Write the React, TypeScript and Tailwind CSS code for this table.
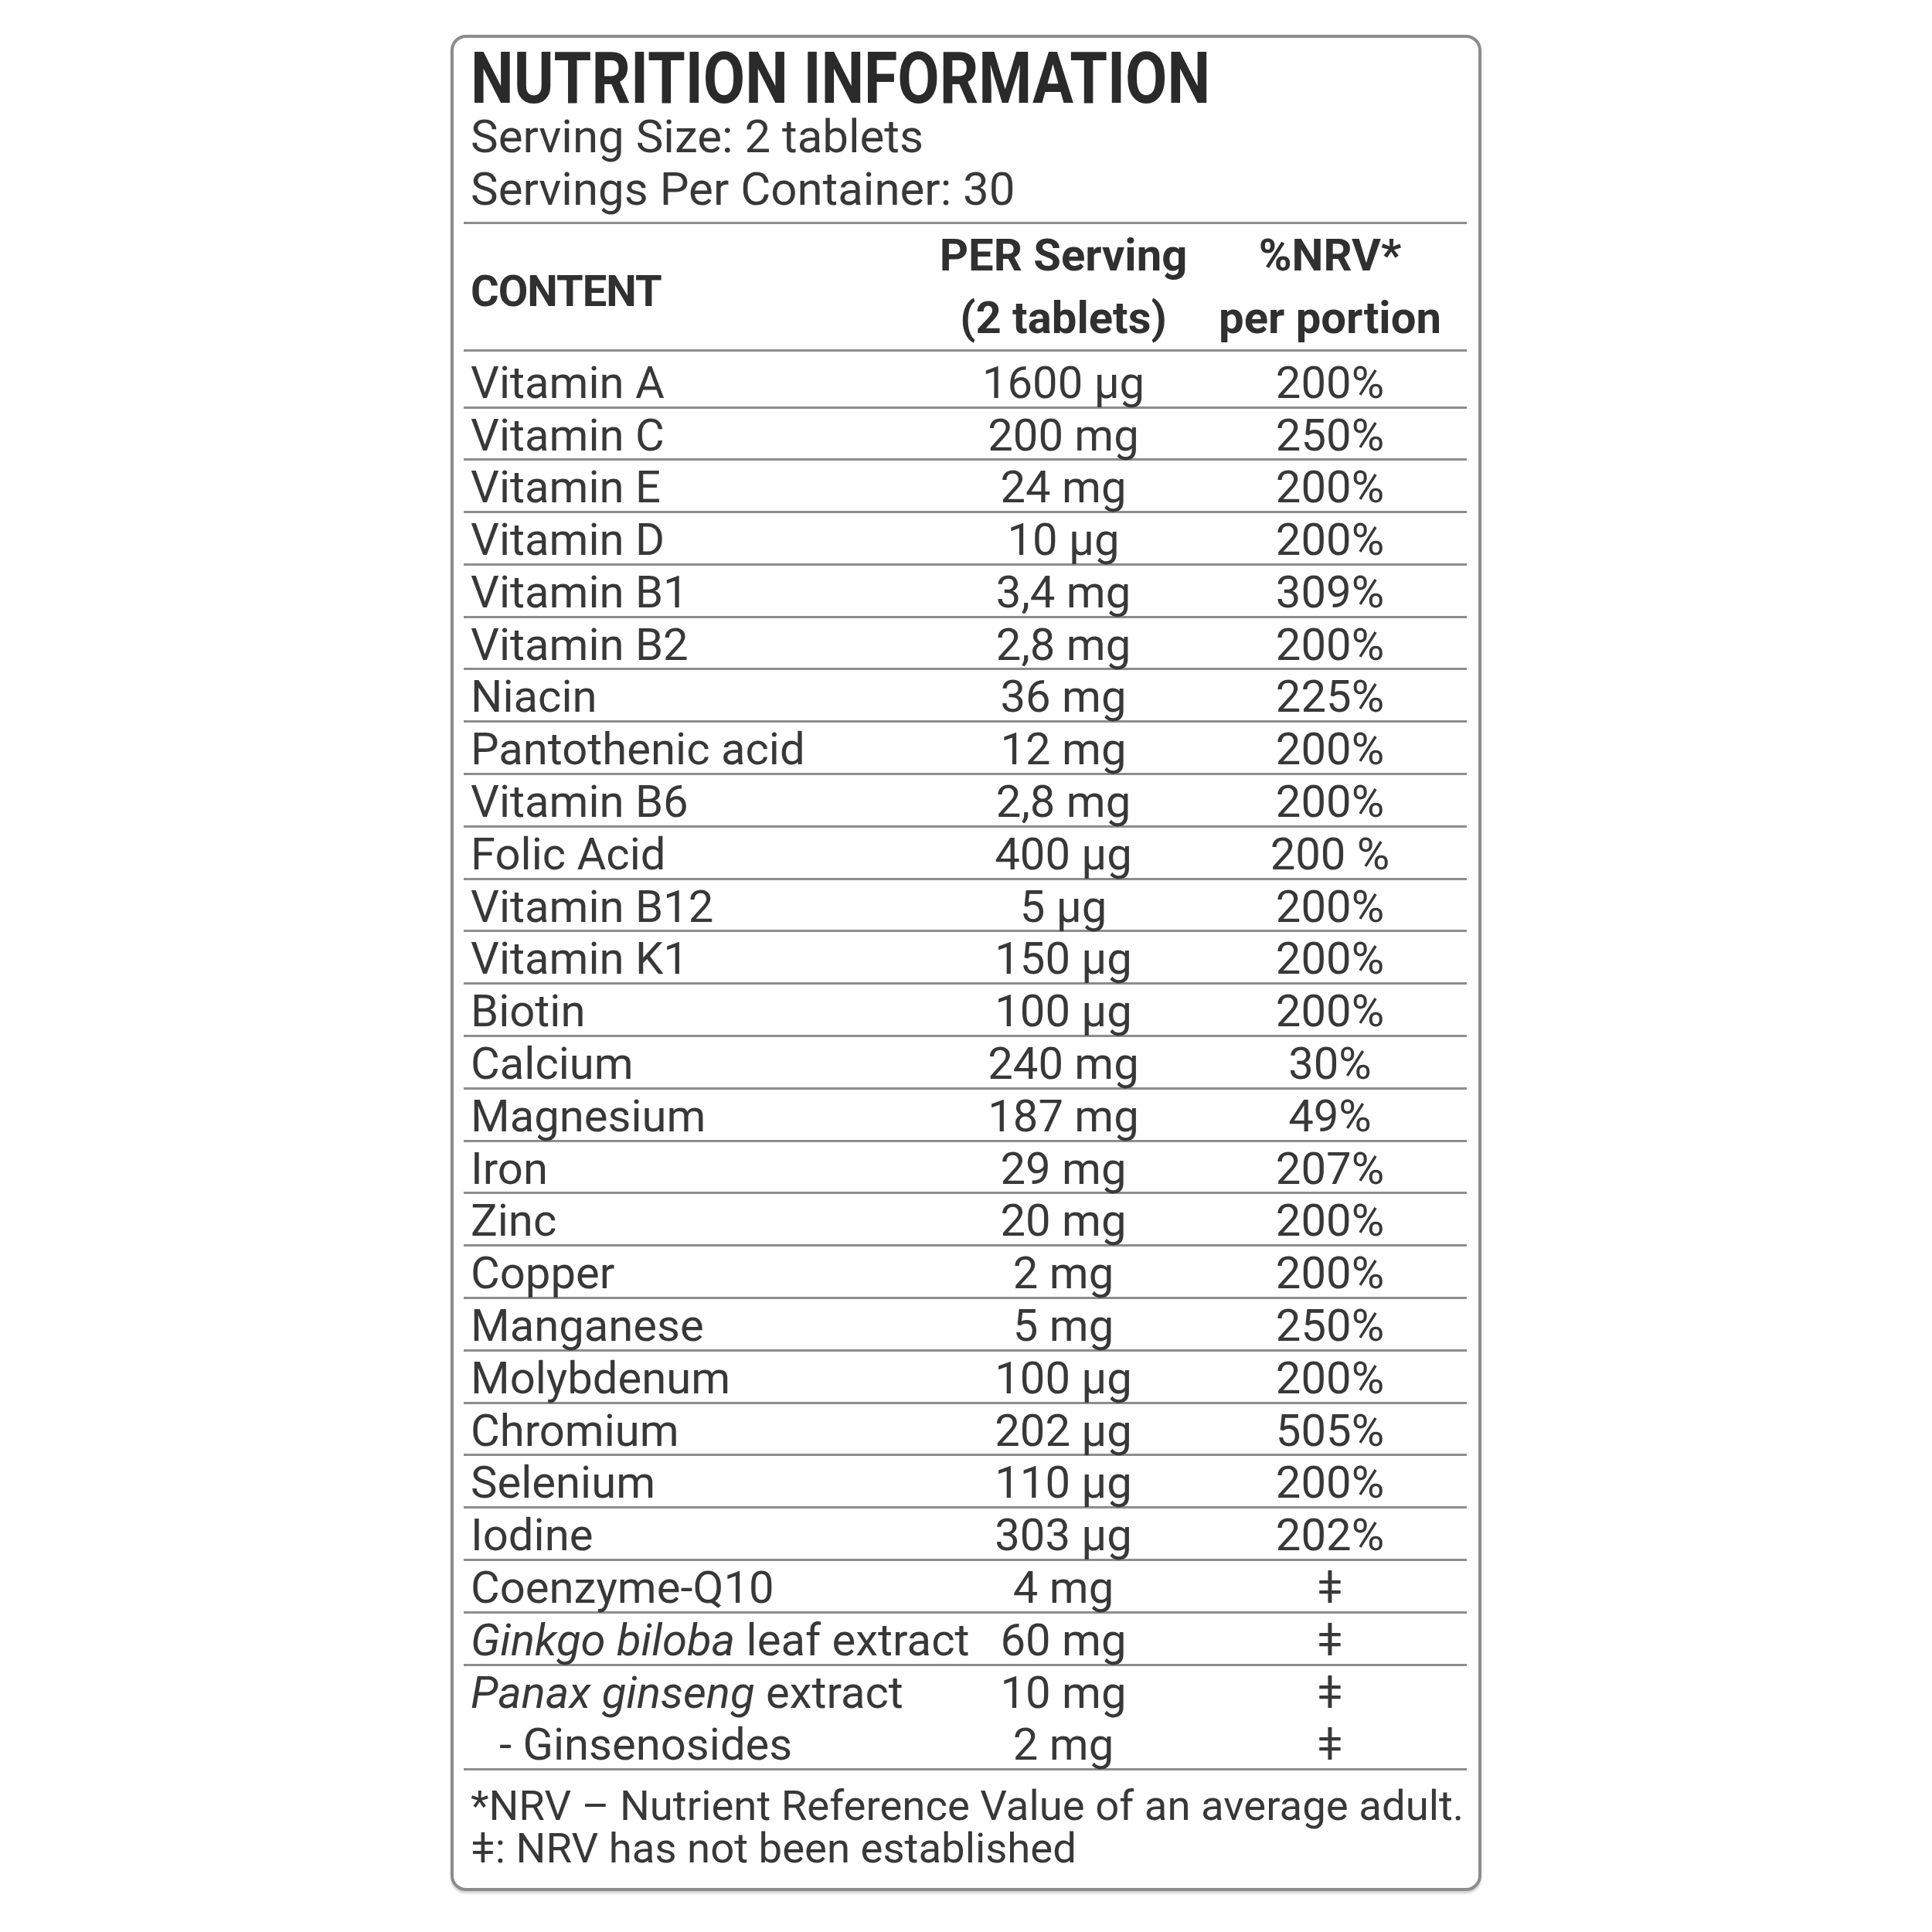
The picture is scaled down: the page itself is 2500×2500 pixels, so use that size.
import type { ReactNode } from "react"

type Row = {
  name: ReactNode
  amount: string
  nrv: string
  indent?: boolean
  noLine?: boolean
}

const rows: Row[] = [
  { name: "Vitamin A", amount: "1600 µg", nrv: "200%" },
  { name: "Vitamin C", amount: "200 mg", nrv: "250%" },
  { name: "Vitamin E", amount: "24 mg", nrv: "200%" },
  { name: "Vitamin D", amount: "10 µg", nrv: "200%" },
  { name: "Vitamin B1", amount: "3,4 mg", nrv: "309%" },
  { name: "Vitamin B2", amount: "2,8 mg", nrv: "200%" },
  { name: "Niacin", amount: "36 mg", nrv: "225%" },
  { name: "Pantothenic acid", amount: "12 mg", nrv: "200%" },
  { name: "Vitamin B6", amount: "2,8 mg", nrv: "200%" },
  { name: "Folic Acid", amount: "400 µg", nrv: "200 %" },
  { name: "Vitamin B12", amount: "5 µg", nrv: "200%" },
  { name: "Vitamin K1", amount: "150 µg", nrv: "200%" },
  { name: "Biotin", amount: "100 µg", nrv: "200%" },
  { name: "Calcium", amount: "240 mg", nrv: "30%" },
  { name: "Magnesium", amount: "187 mg", nrv: "49%" },
  { name: "Iron", amount: "29 mg", nrv: "207%" },
  { name: "Zinc", amount: "20 mg", nrv: "200%" },
  { name: "Copper", amount: "2 mg", nrv: "200%" },
  { name: "Manganese", amount: "5 mg", nrv: "250%" },
  { name: "Molybdenum", amount: "100 µg", nrv: "200%" },
  { name: "Chromium", amount: "202 µg", nrv: "505%" },
  { name: "Selenium", amount: "110 µg", nrv: "200%" },
  { name: "Iodine", amount: "303 µg", nrv: "202%" },
  { name: "Coenzyme-Q10", amount: "4 mg", nrv: "ǂ" },
  {
    name: (
      <>
        <i>Ginkgo biloba</i> leaf extract
      </>
    ),
    amount: "60 mg",
    nrv: "ǂ",
  },
  {
    name: (
      <>
        <i>Panax ginseng</i> extract
      </>
    ),
    amount: "10 mg",
    nrv: "ǂ",
    noLine: true,
  },
  { name: "- Ginsenosides", amount: "2 mg", nrv: "ǂ", indent: true },
]

function NutrientRow({ row, first }: { row: Row; first: boolean }) {
  const line = row.noLine ? "border-transparent" : "border-[#8d8d8d]"
  return (
    <div
      className={
        first
          ? `grid grid-cols-[608px_336px_354px] h-[74px] pt-[6px] border-b-[3px] leading-[69px] ${line}`
          : `grid grid-cols-[608px_336px_354px] h-[67.8px] border-b-[3px] leading-[69px] ${line}`
      }
    >
      <div className={row.indent ? "pl-[46px] whitespace-nowrap" : "pl-[9px] whitespace-nowrap"}>{row.name}</div>
      <div className="text-center whitespace-nowrap">{row.amount}</div>
      <div className="text-center whitespace-nowrap">{row.nrv}</div>
    </div>
  )
}

export default function App() {
  return (
    <div className="w-[2500px] h-[2500px] bg-white flex justify-center pt-[45px] font-[Roboto,'Liberation_Sans',sans-serif] text-[#383838]">
      <div className="w-[1334px] h-fit border-[4px] border-[#8c8c8c] rounded-[20px] pl-[13px] pr-[15px] pt-[11px] pb-[24px] shadow-[0_3px_3px_rgba(0,0,0,0.18)]">
        <div className="pl-[9px] pb-[8px] border-b-[3px] border-[#8d8d8d]">
          <div className="h-[83px] overflow-visible">
            <h1 className="inline-block origin-left scale-x-[0.857] text-[92px] leading-[83px] font-bold text-[#2a2a2a] whitespace-nowrap">
              NUTRITION INFORMATION
            </h1>
          </div>
          <p className="text-[60px] leading-[68px]">Serving Size: 2 tablets</p>
          <p className="text-[60px] leading-[68px]">Servings Per Container: 30</p>
        </div>

        <div className="grid grid-cols-[608px_336px_354px] h-[164.5px] border-b-[3px] border-[#8d8d8d] font-bold text-[58px] leading-[81px] text-[#303030]">
          <div className="pl-[9px] pt-[47px] text-[56px] tracking-[-1px]">CONTENT</div>
          <div className="text-center whitespace-nowrap">
            <div>PER Serving</div>
            <div>(2 tablets)</div>
          </div>
          <div className="text-center whitespace-nowrap">
            <div>%NRV*</div>
            <div>per portion</div>
          </div>
        </div>

        <div className="text-[58px]">
          {rows.map((row, i) => (
            <NutrientRow key={i} row={row} first={i === 0} />
          ))}
        </div>

        <div className="pl-[9px] pt-[18px] text-[54.5px] leading-[55px] whitespace-nowrap">
          <p>*NRV – Nutrient Reference Value of an average adult.</p>
          <p>ǂ: NRV has not been established</p>
        </div>
      </div>
    </div>
  )
}
